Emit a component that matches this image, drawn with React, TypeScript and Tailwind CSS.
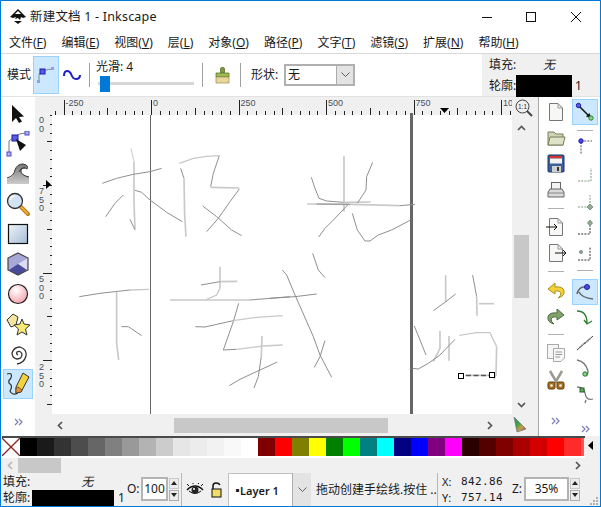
import React from 'react';

const swatches = [
  '#000000', '#1a1a1a', '#333333', '#4d4d4d', '#666666', '#808080', '#999999', '#b3b3b3', '#cccccc', '#e6e6e6',
  '#ececec', '#f2f2f2', '#f9f9f9', '#ffffff', '#800000', '#ff0000', '#808000', '#ffff00', '#008000', '#00ff00',
  '#008080', '#00ffff', '#000080', '#0000ff', '#800080', '#ff00ff', '#2b0000', '#550000', '#800000', '#aa0000',
  '#d40000', '#ff0000', '#ff2a2a',
];

const menus = [
  ['文件(', 'F', ')'], ['编辑(', 'E', ')'], ['视图(', 'V', ')'], ['层(', 'L', ')'], ['对象(', 'O', ')'],
  ['路径(', 'P', ')'], ['文字(', 'T', ')'], ['滤镜(', 'S', ')'], ['扩展(', 'N', ')'], ['帮助(', 'H', ')'],
];

// stroke lists are written in the coordinates of a 3x crop, grouped by crop origin
const thin = '#8f8f8f';
const light = '#c9c9c9';
type Stroke = [string, number, string];
const strokeGroups: { x: number; y: number; strokes: Stroke[] }[] = [
  {
    x: 50, y: 115,
    strokes: [
      ['M243 100L252 140', 3, light],
      ['M252 140L252 260L255 345', 5, light],
      ['M157 205L200 190L250 178L300 170L335 160', 3, thin],
      ['M255 226L275 232L300 255L350 292L397 320', 3, thin],
      ['M220 240L195 265L167 305', 3, thin],
      ['M240 313L254 343', 3, thin],
      ['M388 145L430 130L470 124L508 122', 4, light],
      ['M508 122L490 175L482 215', 3, thin],
      ['M482 217L568 219', 5, light],
      ['M568 222L540 260L505 310L470 350', 3, thin],
      ['M392 160L402 190', 3, thin],
      ['M402 190L404 300L408 365', 5, light],
      ['M458 273L500 305L545 345L575 362', 3, thin],
    ],
  },
  {
    x: 270, y: 115,
    strokes: [
      ['M222 123L222 290', 5, light],
      ['M124 187L135 220L147 250L170 258L220 262', 3, thin],
      ['M220 262L302 261', 5, light],
      ['M112 267L240 268L390 272', 5, light],
      ['M140 267L240 268', 3, thin],
      ['M390 272L435 268', 3, thin],
      ['M308 142L290 185L288 225L262 265', 3, thin],
      ['M235 268L190 315L165 340L146 366', 3, thin],
      ['M247 295L262 345L285 378L300 378L325 360L365 345L420 316', 3, thin],
      ['M128 415L145 465L165 488', 3, thin],
    ],
  },
  {
    x: 50, y: 260,
    strokes: [
      ['M88 110L150 100L240 90', 3, thin],
      ['M240 90L297 88', 4, light],
      ['M200 95L200 250L206 300', 5, light],
      ['M214 200L235 200L275 227', 3, thin],
      ['M510 20L510 85', 5, light],
      ['M510 85L500 105L470 118', 4, light],
      ['M453 75L510 65', 3, thin],
      ['M510 65L562 64', 5, light],
      ['M360 120L600 120', 5, light],
      ['M600 120L720 110', 3, thin],
      ['M566 130L550 185L520 270L560 268', 3, thin],
      ['M560 268L640 258L698 255', 4, light],
      ['M436 200L465 201L550 182', 3, thin],
      ['M550 182L620 172L698 167', 4, light],
      ['M636 228L634 290', 5, light],
      ['M634 290L625 350L612 384', 3, thin],
      ['M538 377L570 358L630 330L682 306', 3, thin],
    ],
  },
  {
    x: 270, y: 260,
    strokes: [
      ['M0 115L75 110L140 102', 3, thin],
      ['M37 30L50 45L75 105L130 230L150 285L185 352', 3, thin],
      ['M165 242L150 290L133 322', 3, thin],
      ['M527 45L527 125', 5, light],
      ['M557 102L525 127L490 152', 3, thin],
      ['M608 45L620 110', 3, thin],
      ['M620 110L621 167', 5, light],
      ['M627 131L672 131', 5, light],
      ['M433 198L450 240L468 285', 3, thin],
      ['M510 212L510 265L490 305', 5, light],
      ['M537 228L537 302', 5, light],
      ['M427 325L445 327L475 310L510 285L555 238', 3, thin],
      ['M568 226L620 218L660 218L680 260', 4, light],
      ['M680 260L678 345L672 358', 5, light],
      ['M585 346L665 346', 5, light],
    ],
  },
];

function Drawing() {
  return (
    <svg width={460} height={299} viewBox="52 115 460 299" className="block">
      <rect x={150} y={115} width={1} height={299} fill="#666" />
      <rect x={410} y={115} width={3} height={299} fill="#666" />
      {strokeGroups.map((g) => (
        <g key={g.x + '-' + g.y} transform={`translate(${g.x} ${g.y}) scale(0.3333)`} fill="none">
          {g.strokes.map(([d, w, c], i) => (
            <path key={i} d={d} stroke={c} strokeWidth={w} />
          ))}
        </g>
      ))}
      <path d="M466 375.5H492" stroke="#555" strokeWidth={1.5} strokeDasharray="5 2.5" />
      <rect x={458.5} y={373.5} width={5} height={5} fill="#fff" stroke="#000" />
      <rect x={489.5} y={372.5} width={5} height={5} fill="#fff" stroke="#000" />
    </svg>
  );
}

function HRuler() {
  const ticks = Array.from({ length: 60 }, (_, k) => k - 1);
  const labels: [string, number][] = [['-250', 63.5], ['0', 151], ['250', 238.5], ['500', 326], ['750', 413.5], ['10', 501]];
  return (
    <svg width={460} height={18} viewBox="52 97 460 18" className="block">
      {ticks.map((k) => {
        const x = Math.round(63.5 + 8.75 * k) + 0.5;
        const h = k % 10 === 0 ? 15 : k % 5 === 0 ? 7 : 4;
        return <line key={k} x1={x} x2={x} y1={115 - h} y2={115} stroke="#222" />;
      })}
      {labels.map(([t, x]) => (
        <text key={t} x={x + 2} y={106} fontSize={9} fontFamily="Liberation Sans" fill="#44525f">{t}</text>
      ))}
      <path d="M440 108H449L444.5 113Z" fill="#000" />
      <rect x={410} y={113} width={3} height={2} fill="#666" />
    </svg>
  );
}

function VRuler() {
  const ticks = Array.from({ length: 36 }, (_, k) => k);
  const labels: [string, number][] = [['00', 123], ['750', 194], ['500', 282], ['250', 370]];
  return (
    <svg width={17} height={301} viewBox="35 115 17 301" className="block">
      {ticks.map((k) => {
        const y = Math.round(97.5 + 8.75 * k) + 0.5;
        const w = k % 10 === 0 ? 9 : k % 5 === 0 ? 5 : 2;
        if (y < 115 || y > 410) return null;
        return <line key={k} x1={52 - w} x2={52} y1={y} y2={y} stroke="#222" />;
      })}
      {labels.map(([t, y]) => (
        <text key={t} y={y} fontSize={9} fontFamily="Liberation Sans" fill="#44525f">
          {t.split('').map((d, i) => (
            <tspan key={i} x={39} dy={i === 0 ? 0 : 8.5}>{d}</tspan>
          ))}
        </text>
      ))}
      <path d="M46 180V189L51 184.5Z" fill="#000" />
    </svg>
  );
}

const Chevrons = () => (
  <svg width={9} height={8} viewBox="0 0 9 8" fill="none" stroke="#7d7db5" strokeWidth={1.2}>
    <path d="M1 1L4 4L1 7M5 1L8 4L5 7" />
  </svg>
);

const Sep = () => <div className="w-[16px] h-px bg-[#b0b0b0]" />;

const ArrowTool = () => (
  <svg width={24} height={24} viewBox="0 0 24 24"><path d="M6 3L6 20L10 16L13 21L16 19.500L13 15L18 14.500Z" fill="#111" /></svg>
);
const NodeTool = () => (
  <svg width={26} height={26} viewBox="0 0 26 26" fill="none">
    <path d="M4 21V10L9 6Q14 2 21 2" stroke="#777" />
    <rect x={7} y={4} width={6} height={6} fill="#5a5ae0" stroke="#1a1ab0" />
    <rect x={20} y={0} width={4} height={4} fill="#b0b0f0" stroke="#4a4ad0" />
    <rect x={2} y={21} width={4} height={4} fill="#b0b0f0" stroke="#4a4ad0" />
    <path d="M11 8L21 14L15 20Z" fill="#111" />
  </svg>
);
const WaveTool = () => (
  <svg width={24} height={24} viewBox="0 0 24 24" fill="none">
    <defs><linearGradient id="wv" x1="0" x2="0" y1="0" y2="1"><stop offset="0" stopColor="#777" /><stop offset="1" stopColor="#ccc" /></linearGradient></defs>
    <path d="M1 22V17Q8 15 9 8Q11 2 17 2Q23 3 21 7Q17 4 15 8Q14 13 23 15V22Z" fill="url(#wv)" />
    <path d="M1 16Q8 14 9 8Q11 2 17 2Q23 3 21 7Q17 4 15 8Q14 13 23 15" stroke="#333" />
    <path d="M13 10Q15 5 19 6" stroke="#333" />
  </svg>
);
const ZoomTool = () => (
  <svg width={26} height={26} viewBox="0 0 26 26" fill="none">
    <path d="M15 15L23 23" stroke="#b87a12" strokeWidth={4} strokeLinecap="round" />
    <path d="M15.500 15.500L22.500 22.500" stroke="#f2a93c" strokeWidth={2} strokeLinecap="round" />
    <circle cx={10} cy={10} r={7.500} fill="#d2e4f3" stroke="#333" strokeWidth={1.3} />
    <path d="M5 9Q6 5 10 5" stroke="#fff" strokeWidth={1.5} />
  </svg>
);
const RectTool = () => (
  <svg width={22} height={22} viewBox="0 0 22 22">
    <defs><linearGradient id="rc" x1="0" x2="1" y1="0" y2="1"><stop offset="0" stopColor="#eef3f8" /><stop offset="1" stopColor="#a5bdd6" /></linearGradient></defs>
    <rect x={1.500} y={1.500} width={19} height={19} fill="url(#rc)" stroke="#111" strokeWidth={1.2} />
  </svg>
);
const BoxTool = () => (
  <svg width={24} height={26} viewBox="0 0 24 26">
    <path d="M12 2L22 7V19L12 24L2 19V7Z" fill="#a8a8d8" />
    <path d="M12 13L22 7V19L12 24Z" fill="#dcdcf0" />
    <path d="M12 13L3 19L12 24L21 19Z" fill="#4a4a9c" />
    <path d="M12 2L22 7V19L12 24L2 19V7Z" fill="none" stroke="#444" strokeWidth={1.2} />
  </svg>
);
const CircleTool = () => (
  <svg width={24} height={24} viewBox="0 0 24 24">
    <defs><radialGradient id="cr" cx="0.400" cy="0.300" r="0.800"><stop offset="0" stopColor="#fff" /><stop offset="1" stopColor="#f59aa4" /></radialGradient></defs>
    <circle cx={12} cy={12} r={9.500} fill="url(#cr)" stroke="#222" strokeWidth={1.2} />
  </svg>
);
const StarTool = () => (
  <svg width={26} height={24} viewBox="0 0 26 24" stroke="#333" strokeWidth={1}>
    <path d="M8 2L13 5L11 13L6 15L2 8Z" fill="#f0e6a0" />
    <path d="M17 7L19 12L25 13L20.500 17L22 23L17 20L12 23L13.500 17L9 13L15 12Z" fill="#f6ea72" />
  </svg>
);
const SpiralTool = () => (
  <svg width={24} height={24} viewBox="0 0 24 24" fill="none" stroke="#333" strokeWidth={1.3}>
    <path d="M12 13Q10 12 11 10Q14 8 16 12Q16 17 11 17Q6 16 6 11Q8 5 14 5Q21 7 20 14Q18 21 11 22" />
  </svg>
);
const PencilTool = () => (
  <svg width={28} height={26} viewBox="0 0 28 26" fill="none">
    <path d="M3 3Q9 1 7 7Q3 11 6 13Q9 15 6 20Q8 25 14 22" stroke="#333" strokeWidth={1.2} />
    <path d="M19 2L25 6L17 21L12 22L12 16Z" fill="#f4d23f" stroke="#333" />
    <path d="M14 16L18 19L17 21L12 22L12 17Z" fill="#e89030" stroke="#333" strokeWidth={0.7} />
  </svg>
);

const leftTools = [ArrowTool, NodeTool, WaveTool, ZoomTool, RectTool, BoxTool, CircleTool, StarTool, SpiralTool];

const DocIcon = ({ children }: { children?: React.ReactNode }) => (
  <svg width={20} height={22} viewBox="0 0 20 22" fill="none">
    <path d="M3.500 2.500H12L16.500 7V19.500H3.500Z" fill="#f7f7f5" stroke="#777" />
    <path d="M12 2.500V7H16.500" stroke="#999" />
    {children}
  </svg>
);
const OpenIcon = () => (
  <svg width={20} height={18} viewBox="0 0 20 18">
    <path d="M2 3H8L10 5H17V16H2Z" fill="#cfd4b4" stroke="#787c5c" />
    <path d="M2 16L4 8H19L17 16Z" fill="#dfe3c6" stroke="#787c5c" />
  </svg>
);
const SaveIcon = () => (
  <svg width={20} height={20} viewBox="0 0 20 20">
    <rect x={2} y={1} width={16} height={17} rx={1} fill="#3a5f9c" stroke="#1d3560" />
    <rect x={4} y={2} width={12} height={2.500} fill="#d8352c" />
    <rect x={4} y={4.500} width={12} height={5} fill="#f3f3f3" />
    <rect x={6} y={12} width={9} height={6} fill="#cfcfcf" />
    <rect x={11} y={13} width={2} height={4} fill="#333" />
  </svg>
);
const PrintIcon = () => (
  <svg width={20} height={20} viewBox="0 0 20 20" stroke="#666">
    <rect x={5.500} y={2.500} width={9} height={7} fill="#f4f4f4" />
    <path d="M4 9H16L18 12V17H2V12Z" fill="#d9d9d9" />
    <path d="M2 13H18" stroke="#888" />
  </svg>
);
const Undo = ({ c, e }: { c: string; e: string }) => (
  <svg width={20} height={18} viewBox="0 0 20 18">
    <path d="M9 2L2 8L9 13V10Q14 9 15 12Q15 15 12 17Q19 15 18 10Q17 5 9 6Z" fill={c} stroke={e} />
  </svg>
);
const CopyIcon = () => (
  <svg width={20} height={20} viewBox="0 0 20 20" stroke="#aaa" fill="#f6f6f6">
    <rect x={1.500} y={1.500} width={11} height={14} />
    <path d="M7.500 5.500H18.500V15L15 18.500H7.500Z" />
    <path d="M9.500 9H16M9.500 11.500H16M9.500 14H14" fill="none" stroke="#999" />
  </svg>
);
const CutIcon = () => (
  <svg width={20} height={20} viewBox="0 0 20 20">
    <path d="M4 1L11 13M16 1L9 13" stroke="#9a9a92" strokeWidth={2.500} />
    <rect x={2} y={12} width={7} height={7} rx={1.500} fill="#a8701e" stroke="#5a3a08" />
    <rect x={11} y={12} width={7} height={7} rx={1.500} fill="#a8701e" stroke="#5a3a08" />
    <circle cx={5.500} cy={15.500} r={1.200} fill="#fff" />
    <circle cx={14.500} cy={15.500} r={1.200} fill="#fff" />
  </svg>
);

const SnapBbox = () => (
  <svg width={20} height={20} viewBox="0 0 20 20">
    <path d="M3 3L15 15" stroke="#111" strokeWidth={1.5} />
    <path d="M16 16L11 14.500L14.500 11Z" fill="#111" />
    <circle cx={3.500} cy={3.500} r={2.200} fill="#5a5af0" stroke="#1a1aa0" />
    <circle cx={16} cy={16} r={2.200} fill="#8ccf8c" stroke="#2a8a2a" />
  </svg>
);
const Dashed = ({ d, c = '#777' }: { d: string; c?: string }) => (
  <path d={d} fill="none" stroke={c} strokeDasharray="2 1.200" />
);
const SnapA = () => (
  <svg width={18} height={18} viewBox="0 0 18 18">
    <Dashed d="M5 5H16M5 6V18" c="#555" />
    <circle cx={5} cy={5} r={2.200} fill="#4a4af0" stroke="#1a1aa0" />
  </svg>
);
const SnapB = () => (
  <svg width={16} height={16} viewBox="0 0 16 16"><Dashed d="M1 14H14V1" c="#7d9a7d" /></svg>
);
const SnapC = () => (
  <svg width={16} height={16} viewBox="0 0 16 16">
    <Dashed d="M1 13H13V1" c="#7d9a7d" />
    <path d="M13 10L16 13L13 16L10 13Z" fill="#8fae8f" stroke="#566" strokeWidth={0.6} />
  </svg>
);
const SnapD = () => (
  <svg width={16} height={16} viewBox="0 0 16 16">
    <Dashed d="M1 14H13V6" c="#333" />
    <path d="M13 0L15.500 3L13 6L10.500 3Z" fill="#8fae8f" stroke="#566" strokeWidth={0.6} />
  </svg>
);
const SnapE = () => (
  <svg width={16} height={16} viewBox="0 0 16 16">
    <Dashed d="M1 14H13V1" c="#333" />
    <circle cx={4} cy={6} r={1.600} fill="#8fae8f" stroke="#566" strokeWidth={0.6} />
  </svg>
);
const CurveActive = () => (
  <svg width={20} height={18} viewBox="0 0 20 18" fill="none">
    <path d="M2 11Q4 3 10 4M4 9Q7 15 18 16" stroke="#666" strokeWidth={1.5} />
    <circle cx={12} cy={4} r={2.500} fill="#4a4af0" stroke="#1a1aa0" />
  </svg>
);
const CurveGreen = () => (
  <svg width={18} height={18} viewBox="0 0 18 18" fill="none" stroke="#2d7d2d" strokeWidth={1.300}>
    <path d="M1 2Q11 2 11 14M8 11L11 15L16 12" />
  </svg>
);
const CurveCross = () => (
  <svg width={18} height={16} viewBox="0 0 18 16" fill="none">
    <path d="M1 15L17 1" stroke="#444" />
    <path d="M4 12L14 4" stroke="#888" strokeWidth={2} strokeDasharray="1 1" />
  </svg>
);
const CurveBot = () => (
  <svg width={18} height={20} viewBox="0 0 18 20" fill="none">
    <path d="M1 1Q10 3 12 12Q12 16 10 17" stroke="#777" strokeWidth={1.3} />
    <circle cx={9} cy={15} r={2.200} fill="#8ccf8c" stroke="#2a7a2a" />
  </svg>
);
const CurveTop = () => (
  <svg width={18} height={18} viewBox="0 0 18 18" fill="none">
    <path d="M1 1Q8 1 9 7Q10 15 17 13M10 14L9 17" stroke="#777" strokeWidth={1.3} />
    <rect x={4} y={2} width={4} height={4} fill="#5faf5f" stroke="#2a5a2a" />
  </svg>
);

const ChevUp = () => (
  <svg width={9} height={6} viewBox="0 0 9 6" fill="none" stroke="#555" strokeWidth={1.700}><path d="M1 5L4.500 1.500L8 5" /></svg>
);
const ChevDown = () => (
  <svg width={9} height={6} viewBox="0 0 9 6" fill="none" stroke="#555" strokeWidth={1.700}><path d="M1 1L4.500 4.500L8 1" /></svg>
);
const ChevLeft = ({ c = '#555' }: { c?: string }) => (
  <svg width={6} height={9} viewBox="0 0 6 9" fill="none" stroke={c} strokeWidth={1.700}><path d="M5 1L1.500 4.500L5 8" /></svg>
);
const ChevRight = () => (
  <svg width={6} height={9} viewBox="0 0 6 9" fill="none" stroke="#555" strokeWidth={1.700}><path d="M1 1L4.500 4.500L1 8" /></svg>
);

const Spin = () => (
  <div className="flex flex-col gap-px">
    <div className="w-[10px] h-[11px] bg-[#ececec] border border-[#c8c8c8] flex items-center justify-center">
      <svg width={6} height={4} viewBox="0 0 6 4"><path d="M3 0L6 4H0Z" fill="#222" /></svg>
    </div>
    <div className="w-[10px] h-[11px] bg-[#ececec] border border-[#adadad] flex items-center justify-center">
      <svg width={6} height={4} viewBox="0 0 6 4"><path d="M0 0H6L3 4Z" fill="#222" /></svg>
    </div>
  </div>
);

const ComboButton = ({ w }: { w: string }) => (
  <div className={`${w} h-full bg-[#e3e3e3] border-l border-[#acacac] flex items-center justify-center`}>
    <svg width={9} height={6} viewBox="0 0 9 6" fill="none" stroke="#606060"><path d="M0.500 0.500L4.500 4.500L8.500 0.500" /></svg>
  </div>
);

const col1: { h: number; el: React.ReactNode }[] = [
  { h: 26, el: <DocIcon /> },
  { h: 26, el: <OpenIcon /> },
  { h: 26, el: <SaveIcon /> },
  { h: 26, el: <PrintIcon /> },
  { h: 10, el: <Sep /> },
  { h: 28, el: <DocIcon><path d="M0 11H11M8 8L11 11L8 14" stroke="#111" /></DocIcon> },
  { h: 24, el: <DocIcon><path d="M9 11H20M17 8L20 11L17 14" stroke="#111" /></DocIcon> },
  { h: 12, el: <Sep /> },
  { h: 26, el: <Undo c="#f2d238" e="#a89020" /> },
  { h: 26, el: <div className="-scale-x-100"><Undo c="#7fa36a" e="#4e6b40" /></div> },
  { h: 10, el: <Sep /> },
  { h: 28, el: <CopyIcon /> },
  { h: 26, el: <CutIcon /> },
];

const col2: { h: number; el: React.ReactNode; on?: boolean }[] = [
  { h: 26, el: <SnapBbox />, on: true },
  { h: 10, el: <Sep /> },
  { h: 20, el: <SnapA /> },
  { h: 40, el: <SnapB /> },
  { h: 14, el: <SnapC /> },
  { h: 38, el: <SnapD /> },
  { h: 14, el: <SnapE /> },
  { h: 18, el: <Sep /> },
  { h: 26, el: <CurveActive />, on: true },
  { h: 25, el: <CurveGreen /> },
  { h: 26, el: <CurveCross /> },
  { h: 26, el: <CurveBot /> },
  { h: 25, el: <CurveTop /> },
];

export default function App() {
  return (
    <div
      className="w-[601px] h-[507px] overflow-hidden bg-[#f0f0f0] border-x border-b border-t border-[#0078d7] flex flex-col text-[12px] text-[#1a1a1a]"
      style={{ fontFamily: '"Noto Sans", "Noto Sans CJK SC", sans-serif' }}
    >
      {/* title bar */}
      <div className="h-[32px] shrink-0 bg-white flex items-center">
        <svg width={18} height={16} viewBox="0 0 18 16" className="ml-[8px]">
          <path d="M9 0L17 8L14 9L12 8L11 11L9 9L6 10L7 8L4 9L1 8Z" fill="#111" />
          <path d="M9 2L12 5H6Z" fill="#fff" />
          <path d="M5 12H13L9 15Z" fill="#111" />
        </svg>
        <span className="ml-[3px] leading-none text-[12.500px] tracking-[0.2px]">新建文档 1 - Inkscape</span>
        <div className="ml-auto flex items-center">
          <svg width={10} height={1} className="mr-[34px]"><rect width={10} height={1} fill="#111" /></svg>
          <svg width={10} height={10} className="mr-[35px]"><rect x={0.500} y={0.500} width={9} height={9} fill="none" stroke="#111" /></svg>
          <svg width={10} height={10} className="mr-[19px]"><path d="M0 0L10 10M10 0L0 10" stroke="#111" /></svg>
        </div>
      </div>

      {/* menu */}
      <div className="h-[21px] shrink-0 bg-white flex items-center pl-[8px] gap-[15px] text-[12px] leading-none border-b border-[#d9d9d9]">
        {menus.map(([a, k, c]) => (
          <span key={k} className="whitespace-nowrap">
            {a}<span className="underline">{k}</span>{c}
          </span>
        ))}
      </div>

      {/* tool controls */}
      <div className="h-[43px] shrink-0 flex border-b border-[#e2e2e2]">
        <div className="w-[481px] bg-white flex items-center">
          <span className="ml-[6px] w-[26px]">模式</span>
          <div className="w-[26px] h-[38px] bg-[#cce8ff] border border-[#99d1ff] flex items-center justify-center">
            <svg width={20} height={16} viewBox="0 0 20 16" fill="none">
              <path d="M3 14V7L7 4Q12 2 18 2" stroke="#888" />
              <rect x={4} y={2} width={5} height={5} fill="#5a5ae0" stroke="#1a1ab0" />
              <rect x={15} y={0} width={3} height={3} fill="#9a9af0" />
              <rect x={1} y={13} width={3} height={3} fill="#9a9af0" />
            </svg>
          </div>
          <svg width={18} height={12} viewBox="0 0 18 12" fill="none" stroke="#1c1cc8" strokeWidth={2} className="ml-[4px]">
            <path d="M1 7Q1 2 4 2Q7 2 8.500 6Q10 10 13 10Q17 10 17 6" />
          </svg>
          <div className="ml-[8px] w-px h-[24px] bg-[#a0a0a0]" />
          <div className="ml-[6px] w-[100px] flex flex-col">
            <span className="leading-[16px] h-[17px]">光滑: 4</span>
            <div className="relative h-[16px] flex items-center">
              <div className="ml-[2px] w-[96px] h-[3px] bg-[#d6d6d6]" />
              <div className="absolute left-[4px] top-0 w-[10px] h-[16px] bg-[#0078d7]" />
            </div>
          </div>
          <div className="ml-[6px] w-px h-[24px] bg-[#a0a0a0]" />
          <svg width={16} height={17} viewBox="0 0 16 17" className="ml-[12px]">
            <rect x={5.500} y={0.500} width={4} height={6} rx={1.500} fill="#7f9a3a" stroke="#4f6420" strokeWidth={0.700} />
            <path d="M1 6H14V10H1Z" fill="#9fbb55" stroke="#55692a" strokeWidth={0.700} />
            <path d="M1 10H14V16H1Z" fill="#e6d79a" stroke="#9a8a50" strokeWidth={0.700} />
          </svg>
          <div className="ml-[9px] w-px h-[24px] bg-[#a0a0a0]" />
          <span className="ml-[10px] w-[33px]">形状:</span>
          <div className="w-[71px] h-[22px] border-2 border-[#b0b0b0] bg-white flex items-center justify-between">
            <span className="ml-[2px] leading-none">无</span>
            <ComboButton w="w-[17px]" />
          </div>
        </div>
        <div className="flex-1 flex flex-col pl-[7px] relative whitespace-nowrap">
          <div className="h-[21px] flex items-center">
            <span className="w-[41px]">填充:</span>
            <span className="ml-[13px] italic">无</span>
          </div>
          <div className="h-[21px] flex items-center">
            <span className="w-[27px]">轮廓:</span>
            <div className="w-[56px] h-[22px] bg-black shrink-0" />
            <span className="ml-[3px]">1</span>
          </div>
        </div>
      </div>

      {/* main area */}
      <div className="h-[339px] shrink-0 flex">
        <div className="w-[34px] bg-white flex flex-col pt-[2px] items-center">
          {leftTools.map((Tool, i) => (
            <div key={i} className="h-[30px] w-full flex items-center justify-center">
              <Tool />
            </div>
          ))}
          <div className="h-[30px] w-[30px] bg-[#cce8ff] border border-[#99d1ff] flex items-center justify-center">
            <PencilTool />
          </div>
          <div className="mt-[19px]"><Chevrons /></div>
        </div>

        <div className="w-[503px] flex flex-col">
          <div className="h-[18px] flex">
            <div className="w-[17px]" />
            <HRuler />
            <div className="flex-1 flex items-center justify-center pt-[3px] -ml-[2px]">
              <svg width={18} height={18} viewBox="0 0 18 18" fill="none">
                <circle cx={7.500} cy={7.500} r={6.500} stroke="#444" />
                <path d="M12 12L17 17" stroke="#444" strokeWidth={2} />
                <text x={7.500} y={10} fontSize={6.500} textAnchor="middle" fill="#333" stroke="none" fontFamily="Liberation Sans">1:1</text>
              </svg>
            </div>
          </div>
          <div className="h-[301px] flex">
            <VRuler />
            <div className="w-[460px] h-[299px] bg-white"><Drawing /></div>
            <div className="ml-[2px] w-[15px] flex flex-col items-center">
              <div className="h-[120px] pt-[10px]"><ChevUp /></div>
              <div className="w-full h-[63px] shrink-0 bg-[#c8c8c8]" />
              <div className="flex-1 flex items-end pb-[8px]"><ChevDown /></div>
            </div>
          </div>
          <div className="h-[20px] flex">
            <div className="w-[17px]" />
            <div className="w-[445px] h-[16px] mt-[1px] flex items-center relative pl-[5px]">
              <ChevLeft />
              <div className="ml-[111px] w-[214px] h-[15px] bg-[#c8c8c8]" />
              <div className="ml-auto mr-[4px]"><ChevRight /></div>
            </div>
            <svg width={18} height={18} viewBox="0 0 18 18" className="ml-[14px]">
              <defs>
                <linearGradient id="pal" x1="0" x2="1" y1="0" y2="1">
                  <stop offset="0" stopColor="#2b9a6b" />
                  <stop offset="0.400" stopColor="#3f9f4f" />
                  <stop offset="0.650" stopColor="#c8a040" />
                  <stop offset="1" stopColor="#8040a0" />
                </linearGradient>
              </defs>
              <path d="M3 1L15 13L6 16Z" fill="url(#pal)" stroke="#666" strokeWidth={0.600} />
            </svg>
          </div>
        </div>

        <div className="flex-1 bg-white border-l border-[#a8a8a8] flex pt-[2px]">
          <div className="w-[33px] flex flex-col items-center">
            {col1.map((it, i) => (
              <div key={i} className="w-full flex items-center justify-center" style={{ height: it.h }}>{it.el}</div>
            ))}
            <div className="mt-[24px]"><Chevrons /></div>
          </div>
          <div className="flex-1 flex flex-col items-start">
            {col2.map((it, i) => (
              <div
                key={i}
                className={it.on ? 'w-[26px] flex items-center justify-center bg-[#cce8ff] border border-[#99d1ff]' : 'w-[26px] flex items-center justify-center'}
                style={{ height: it.h }}
              >
                {it.el}
              </div>
            ))}
            <div className="ml-[9px] mt-[18px]"><Chevrons /></div>
          </div>
        </div>
      </div>

      {/* palette */}
      <div className="h-[22px] shrink-0 flex">
        <div className="w-[584px] flex flex-col">
          <div className="h-[2px] bg-[#4a4a4a] ml-px" />
          <div className="h-[18px] flex ml-px overflow-hidden">
            <svg width={18} height={18} viewBox="0 0 18 18" className="shrink-0">
              <rect width={18} height={18} fill="#fff" />
              <path d="M0 0L18 18M18 0L0 18" stroke="#8a2020" strokeWidth={1.300} />
            </svg>
            {swatches.map((c, i) => (
              <div key={i} className="w-[17px] h-[18px] shrink-0" style={{ background: c }} />
            ))}
            <div className="w-[3px] h-[18px] shrink-0 bg-[#ff5555]" />
          </div>
          <div className="h-[2px] bg-white" />
        </div>
        <div className="flex-1 flex items-center justify-start pb-[4px] pl-[3px]">
          <svg width={5} height={9} viewBox="0 0 5 9"><path d="M5 0V9L0 4.500Z" fill="#000" /></svg>
        </div>
      </div>

      {/* palette scroll */}
      <div className="h-[15px] shrink-0 flex items-center pl-[6px]">
        <ChevLeft c="#b8b8b8" />
        <div className="ml-[5px] w-[43px] h-[15px] bg-[#c8c8c8]" />
        <div className="ml-[514px]"><ChevRight /></div>
      </div>

      {/* status bar */}
      <div className="flex-1 flex items-center text-[12px] leading-none whitespace-nowrap">
        <div className="w-[126px] pl-[2px] flex flex-col h-full">
          <div className="h-[17px] flex items-center">
            <span>填充:</span>
            <span className="ml-[51px] italic">无</span>
          </div>
          <div className="h-[16px] flex items-center">
            <span className="w-[29px]">轮廓:</span>
            <div className="w-[82px] h-[16px] bg-black" />
            <span className="ml-[4px]">1</span>
          </div>
        </div>
        <span className="w-[14px] -mt-[2px]">O:</span>
        <div className="w-[27px] h-[24px] -mt-[2px] border-2 border-[#b4b4b4] bg-white flex items-center justify-center">100</div>
        <div className="ml-px -mt-[1px]"><Spin /></div>
        <div className="ml-[2px] w-px h-full bg-[#b8b8b8]" />
        <svg width={18} height={14} viewBox="0 0 18 14" className="ml-[4px]" fill="none">
          <path d="M1 7Q9 -1 17 7" stroke="#111" strokeWidth={1.500} />
          <path d="M3 8Q9 13 15 8" stroke="#111" />
          <circle cx={9} cy={7} r={3.500} fill="#222" />
          <circle cx={8} cy={6} r={1} fill="#fff" />
          <path d="M3 3L1 1M7 1V0M12 1L13 0M15 3L17 1" stroke="#111" />
        </svg>
        <svg width={11} height={16} viewBox="0 0 11 16" className="ml-[7px]" fill="none">
          <path d="M2 7V4Q2 1 5 1Q8 1 9 3" stroke="#111" strokeWidth={1.500} />
          <rect x={1} y={7} width={9} height={8} fill="#f2dc6a" stroke="#111" />
        </svg>
        <div className="ml-[6px] w-[64px] h-full border-l border-t border-[#c0c0c0] bg-white flex items-center">
          <span className="ml-[3px] font-semibold text-[11px]"><span className="-mr-[3px] inline-block">▪</span>Layer 1</span>
        </div>
        <div className="w-[19px] h-full">
          <ComboButton w="w-full" />
        </div>
        <span className="ml-[5px] w-[121px]">拖动创建手绘线.按住 ..</span>
        <div className="w-px h-full bg-[#b8b8b8]" />
        <div className="ml-[4px] w-[70px] flex flex-col gap-[5px] text-[11px]">
          <div className="flex">
            <span className="w-[19px]">X:</span>
            <span className="tracking-[0.4px]" style={{ fontFamily: '"DejaVu Sans Mono", monospace' }}>842.86</span>
          </div>
          <div className="flex">
            <span className="w-[19px]">Y:</span>
            <span className="tracking-[0.4px]" style={{ fontFamily: '"DejaVu Sans Mono", monospace' }}>757.14</span>
          </div>
        </div>
        <span className="w-[12px] -mt-[2px]">Z:</span>
        <div className="w-[45px] h-[24px] -mt-[2px] border-2 border-[#b4b4b4] bg-white flex items-center justify-center">35%</div>
        <div className="ml-px -mt-[1px]"><Spin /></div>
        <svg width={8} height={8} viewBox="0 0 8 8" className="ml-[10px] mt-[22px]" fill="#b0b0b0">
          <rect x={6} y={0} width={2} height={2} />
          <rect x={3} y={3} width={2} height={2} />
          <rect x={6} y={3} width={2} height={2} />
          <rect x={0} y={6} width={2} height={2} />
          <rect x={3} y={6} width={2} height={2} />
          <rect x={6} y={6} width={2} height={2} />
        </svg>
      </div>
    </div>
  );
}
